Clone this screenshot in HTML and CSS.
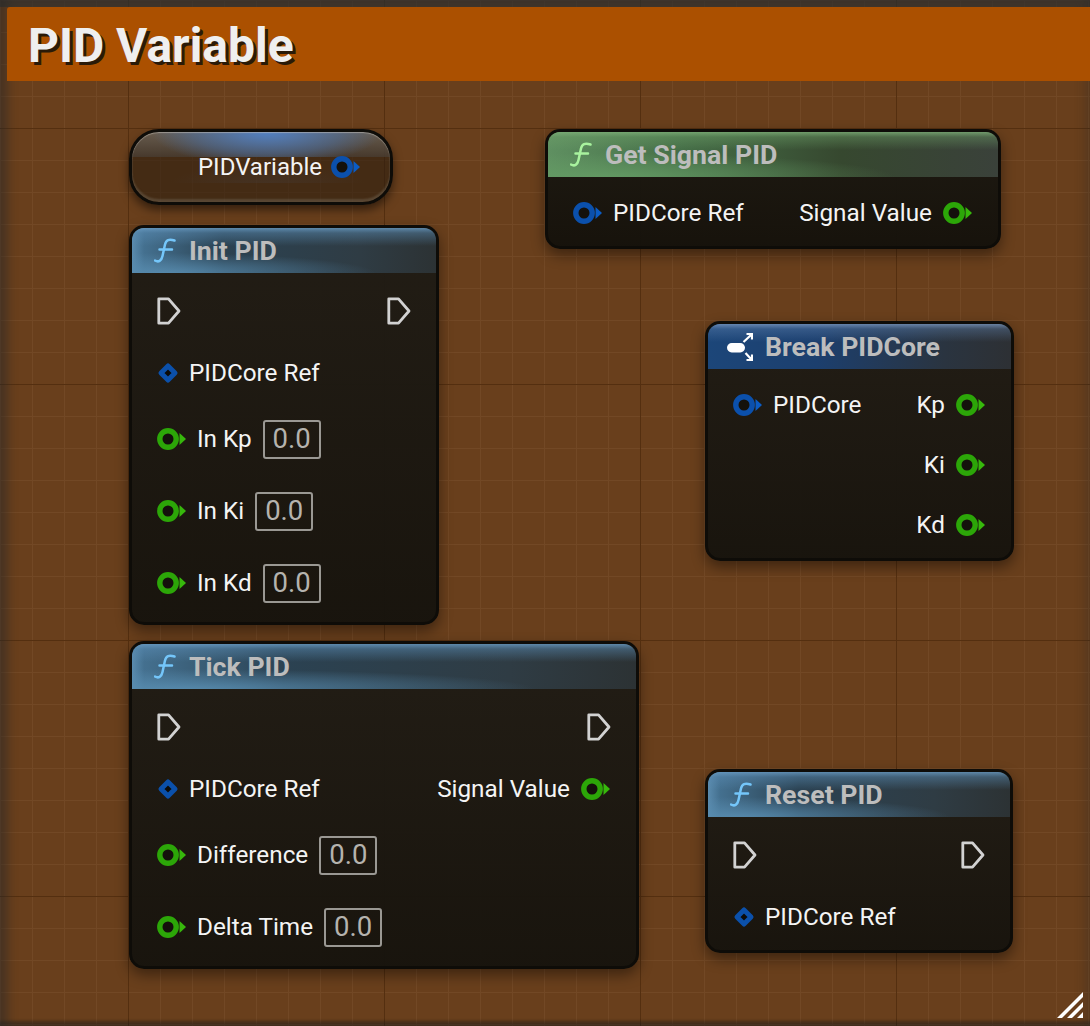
FILE: index.html
```html
<!DOCTYPE html>
<html lang="en">
<head>
  <meta charset="UTF-8" />
  <title>PID Variable</title>
  <link rel="stylesheet" href="styles.css">
</head>
<body>
  <svg class="defs" width="0" height="0">
    <defs>
      <symbol id="exec" viewBox="0 0 24 28">
        <path d="M1.8 1.8H11.5L22 14L11.5 26.2H1.8Z" fill="none" stroke="#d2d2d2" stroke-width="2.8" stroke-linejoin="round"/>
      </symbol>
      <symbol id="pin-blue" viewBox="0 0 29 22">
        <circle cx="11" cy="11" r="8.2" fill="#14110c" stroke="#0b50ac" stroke-width="5.4"/>
        <path d="M22.5 5L29 11L22.5 17Z" fill="#0b5cc4"/>
      </symbol>
      <symbol id="pin-green" viewBox="0 0 29 22">
        <circle cx="11" cy="11" r="8.2" fill="#14110c" stroke="#2ca608" stroke-width="5.4"/>
        <path d="M22.5 5L29 11L22.5 17Z" fill="#37b80c"/>
      </symbol>
      <symbol id="diamond" viewBox="0 0 22 22">
        <path d="M11 4L18 11L11 18L4 11Z" fill="#0c0b08" stroke="#0b50aa" stroke-width="5" stroke-linejoin="round"/>
      </symbol>
      <symbol id="func" viewBox="0 0 22 25">
        <path d="M20.5 2.5C15 0.5 12 2 11 6.5L8.5 18C7.5 23 4.5 24.5 1 22.5M5.5 11.5H18" fill="none" stroke="currentColor" stroke-width="2.5" stroke-linecap="round"/>
      </symbol>
    </defs>
  </svg>

  <div class="canvas">
    <div class="title-bar">PID Variable</div>

    <div class="node var-node">
      <span>PIDVariable</span>
      <svg class="pin"><use href="#pin-blue"/></svg>
    </div>

    <div class="node init-node">
      <div class="head head-func">
        <svg class="func-icon"><use href="#func"/></svg>
        <span>Init PID</span>
      </div>
      <div class="rows">
        <div class="row exec-row">
          <svg class="exec"><use href="#exec"/></svg>
          <svg class="exec"><use href="#exec"/></svg>
        </div>
        <div class="row">
          <div class="side ref-side"><svg class="diamond"><use href="#diamond"/></svg><span>PIDCore Ref</span></div>
        </div>
        <div class="row input-row">
          <div class="side"><svg class="pin"><use href="#pin-green"/></svg><span>In Kp</span><div class="box">0.0</div></div>
        </div>
        <div class="row input-row">
          <div class="side"><svg class="pin"><use href="#pin-green"/></svg><span>In Ki</span><div class="box">0.0</div></div>
        </div>
        <div class="row input-row">
          <div class="side"><svg class="pin"><use href="#pin-green"/></svg><span>In Kd</span><div class="box">0.0</div></div>
        </div>
      </div>
    </div>

    <div class="node get-node">
      <div class="head head-pure">
        <svg class="func-icon"><use href="#func"/></svg>
        <span>Get Signal PID</span>
      </div>
      <div class="rows">
        <div class="row">
          <div class="side"><svg class="pin"><use href="#pin-blue"/></svg><span>PIDCore Ref</span></div>
          <div class="side"><span>Signal Value</span><svg class="pin"><use href="#pin-green"/></svg></div>
        </div>
      </div>
    </div>

    <div class="node break-node">
      <div class="head head-break">
        <svg class="break-icon" viewBox="0 0 26 30">
          <rect x="0" y="11" width="18" height="9.5" rx="4.7" fill="#fff"/>
          <path d="M16.5 10L24 3M19.5 2H25V7.5M18.5 21L24 27M19.5 28H25V22.5" fill="none" stroke="#fff" stroke-width="2.2"/>
        </svg>
        <span>Break PIDCore</span>
      </div>
      <div class="rows">
        <div class="row">
          <div class="side"><svg class="pin"><use href="#pin-blue"/></svg><span>PIDCore</span></div>
          <div class="side"><span>Kp</span><svg class="pin"><use href="#pin-green"/></svg></div>
        </div>
        <div class="row row-end">
          <div class="side"><span>Ki</span><svg class="pin"><use href="#pin-green"/></svg></div>
        </div>
        <div class="row row-end">
          <div class="side"><span>Kd</span><svg class="pin"><use href="#pin-green"/></svg></div>
        </div>
      </div>
    </div>

    <div class="node tick-node">
      <div class="head head-func">
        <svg class="func-icon"><use href="#func"/></svg>
        <span>Tick PID</span>
      </div>
      <div class="rows">
        <div class="row exec-row">
          <svg class="exec"><use href="#exec"/></svg>
          <svg class="exec"><use href="#exec"/></svg>
        </div>
        <div class="row">
          <div class="side ref-side"><svg class="diamond"><use href="#diamond"/></svg><span>PIDCore Ref</span></div>
          <div class="side"><span>Signal Value</span><svg class="pin"><use href="#pin-green"/></svg></div>
        </div>
        <div class="row input-row">
          <div class="side"><svg class="pin"><use href="#pin-green"/></svg><span>Difference</span><div class="box">0.0</div></div>
        </div>
        <div class="row input-row">
          <div class="side"><svg class="pin"><use href="#pin-green"/></svg><span>Delta Time</span><div class="box">0.0</div></div>
        </div>
      </div>
    </div>

    <div class="node reset-node">
      <div class="head head-func">
        <svg class="func-icon"><use href="#func"/></svg>
        <span>Reset PID</span>
      </div>
      <div class="rows">
        <div class="row exec-row">
          <svg class="exec"><use href="#exec"/></svg>
          <svg class="exec"><use href="#exec"/></svg>
        </div>
        <div class="row">
          <div class="side ref-side"><svg class="diamond"><use href="#diamond"/></svg><span>PIDCore Ref</span></div>
        </div>
      </div>
    </div>

    <svg class="grip" viewBox="0 0 26 26">
      <path d="M0 26L26 0V5L5 26ZM10 26L26 10V15L15 26ZM20 26L26 20V26Z" fill="#fff"/>
    </svg>
  </div>
</body>
</html>
```

FILE: styles.css
```css
* {
  box-sizing: border-box;
}
body {
  margin: 0;
  background: #3a3a34;
  font-family: Roboto, "Liberation Sans", sans-serif;
}
.defs {
  position: absolute;
}
.canvas {
  position: relative;
  width: 1090px;
  height: 1026px;
  overflow: hidden;
  padding: 7px 0 0 7px;
  background-color: #693f1c;
  background-image:
    linear-gradient(90deg, #542f10 1px, transparent 1px),
    linear-gradient(180deg, #542f10 1px, transparent 1px),
    linear-gradient(90deg, #724825 1px, transparent 1px),
    linear-gradient(180deg, #724825 1px, transparent 1px);
  background-size: 256px 256px, 256px 256px, 32px 32px, 32px 32px;
  background-position: 128px 0, 0 128px, 0 0, 0 0;
  box-shadow: inset 12px 0 10px -4px rgba(40, 40, 40, .5), inset -10px 0 10px -4px rgba(40, 40, 40, .25), inset 0 -8px 3px -3px rgba(30, 30, 30, .45), inset 0 7px 0 rgba(45, 50, 50, .7);
}
.title-bar {
  height: 74px;
  padding-left: 21px;
  background: #ab5000;
  color: #efefef;
  font-size: 48px;
  font-weight: 700;
  line-height: 77px;
  text-shadow: 3px 3px 0 #2a1a08;
  border-top-left-radius: 3px;
}

/* nodes sit on a free canvas */
.node {
  position: absolute;
  border: 3px solid #0e0c08;
  border-radius: 15px;
  background: linear-gradient(180deg, rgba(32, 28, 21, .97), rgba(22, 19, 13, .97));
  box-shadow: 0 6px 14px rgba(0, 0, 0, .42);
  color: #f4f4f4;
  font-size: 24.3px;
  overflow: hidden;
}
.var-node {
  left: 129px;
  top: 129px;
  width: 264px;
  height: 76px;
  border-radius: 30px;
  padding: 0 30px 0 0;
  display: flex;
  align-items: center;
  justify-content: flex-end;
  gap: 9px;
  font-size: 24px;
  background:
    radial-gradient(ellipse 115px 34px at 135px 0, rgba(80, 130, 200, .95), rgba(75, 115, 170, .5) 65%, transparent) 0 0 / 100% 25px no-repeat,
    linear-gradient(180deg, rgba(115, 108, 98, .75) 0, rgba(72, 62, 52, .75) 25px, transparent 25px),
    radial-gradient(ellipse 100px 24px at 135px 30px, rgba(70, 60, 56, .45), transparent) 0 25px / 100% 26px no-repeat,
    rgba(45, 30, 16, .62);
  box-shadow: 0 5px 10px rgba(0, 0, 0, .5), inset 0 1px 1px rgba(200, 195, 185, .55), inset 0 -3px 2px rgba(130, 122, 110, .35);
}
.get-node {
  left: 545px;
  top: 129px;
  width: 456px;
  height: 120px;
  background: linear-gradient(180deg, rgba(28, 25, 18, .97), rgba(20, 17, 11, .97));
}
.init-node {
  left: 129px;
  top: 225px;
  width: 310px;
  height: 400px;
}
.break-node {
  left: 705px;
  top: 321px;
  width: 309px;
  height: 240px;
}
.tick-node {
  left: 129px;
  top: 641px;
  width: 510px;
  height: 328px;
}
.reset-node {
  left: 705px;
  top: 769px;
  width: 308px;
  height: 184px;
}

.head {
  height: 45px;
  padding-left: 22px;
  display: flex;
  align-items: center;
  gap: 13px;
  color: #bdbdbd;
  font-size: 26.7px;
  font-weight: 700;
}
.head-func {
  background:
    linear-gradient(180deg, rgba(105, 155, 195, .8) 0, rgba(90, 140, 180, .45) 5px, transparent 18px),
    radial-gradient(ellipse 70% 20px at 10% 100%, rgba(88, 140, 175, .9), transparent),
    linear-gradient(90deg, #5a8bae 0, #44708f 12px, #2b4252 30%, #2f3c44 75%, #2c3234 100%);
}
.head-func .func-icon {
  color: #74c6fa;
}
.head-pure {
  background:
    linear-gradient(180deg, rgba(125, 175, 120, .8) 0, rgba(110, 160, 105, .4) 5px, transparent 18px),
    radial-gradient(ellipse 65% 24px at 12% 100%, rgba(100, 155, 100, .9), transparent),
    linear-gradient(90deg, #5f9061 0, #456e47 30%, #36482f 65%, #3a413a 100%);
}
.head-pure .func-icon {
  color: #a8f29e;
}
.head-break {
  padding-left: 19px;
  gap: 12px;
  background:
    linear-gradient(180deg, rgba(125, 155, 195, .75) 0, rgba(100, 135, 180, .35) 5px, transparent 18px),
    linear-gradient(90deg, #1c4679 0, #1c3f6e 36%, #2a3440 78%, #2d3034 100%);
}
.func-icon {
  width: 22px;
  height: 25px;
}
.break-icon {
  width: 26px;
  height: 30px;
}

.rows {
  padding: 22px 26px 21px 25px;
  display: flex;
  flex-direction: column;
  gap: 32px;
}
.row {
  min-height: 28px;
  display: flex;
  align-items: center;
  justify-content: space-between;
  line-height: 28px;
}
.row-end {
  justify-content: flex-end;
}
.exec-row {
  height: 32px;
  margin-right: -1px;
}
.input-row {
  height: 40px;
}
.side {
  display: flex;
  align-items: center;
  gap: 11px;
}
.ref-side {
  gap: 10px;
}
.exec {
  width: 24px;
  height: 28px;
}
.pin {
  width: 29px;
  height: 22px;
  filter: blur(.4px);
}
.diamond {
  width: 22px;
  height: 22px;
}
.box {
  width: 58px;
  height: 39px;
  border: 2.5px solid #9a9893;
  border-radius: 3px;
  color: #b5b3ae;
  font-size: 27.5px;
  line-height: 34px;
  text-align: center;
}
.grip {
  position: absolute;
  right: 7px;
  bottom: 8px;
  width: 26px;
  height: 26px;
}
```
